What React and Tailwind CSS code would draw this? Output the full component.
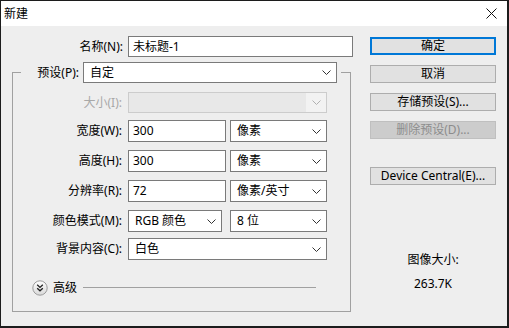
import React from 'react';

const font = { fontFamily: '"Noto Sans", "Noto Sans CJK SC", sans-serif' };

function Chevron({ color = '#333' }) {
  return (
    <svg width="9" height="5" viewBox="0 0 9 5" className="shrink-0">
      <polyline points="0.5,0.5 4.5,4.5 8.5,0.5" fill="none" stroke={color} strokeWidth="1" />
    </svg>
  );
}

function Select({ value, width, height = 'h-[22px]' }) {
  return (
    <div className={`${width} ${height} flex items-center justify-between border border-[#7a7a7a] bg-white pl-[6px] pr-[5px]`}>
      <span className="leading-none">{value}</span>
      <Chevron />
    </div>
  );
}

function Input({ value, width }) {
  return (
    <div className={`${width} h-[22px] flex items-center border border-[#7a7a7a] bg-white pl-[4px]`}>
      <span className="leading-none">{value}</span>
    </div>
  );
}

function Label({ children, disabled }) {
  return (
    <div className={`w-[110px] shrink-0 text-right pr-[1px] ${disabled ? 'text-[#a8a8a8]' : 'text-black'}`}>{children}</div>
  );
}

function Button({ children, primary, disabled }) {
  let cls = 'border border-[#adadad] bg-[#e1e1e1] text-black';
  if (primary) cls = 'border-2 border-[#0078d7] bg-[#e1e1e1] text-black';
  if (disabled) cls = 'border border-[#bfbfbf] bg-[#cccccc] text-[#8c8c8c]';
  return (
    <div className={`w-[126px] h-[18px] flex items-center justify-center leading-none ${cls}`}>{children}</div>
  );
}

export default function App() {
  return (
    <div style={font} className="w-[509px] h-[328px] border-t border-l border-r-2 border-b-2 border-[#1c1c1c] flex flex-col text-[12px] text-black bg-[#eeeeee]">
      {/* title bar */}
      <div className="h-[25px] bg-white flex items-center justify-between pl-[3px] pr-[10px]">
        <span className="text-[12px] leading-none">新建</span>
        <svg width="11" height="11" viewBox="0 0 11 11">
          <path d="M0.5 0.5 L10.5 10.5 M10.5 0.5 L0.5 10.5" stroke="#111" strokeWidth="1" />
        </svg>
      </div>

      <div className="flex flex-1">
        {/* left column */}
        <div className="w-[360px] pt-[10px]">
          <div className="flex items-center">
            <div className="w-[122px] text-right">名称(N):</div>
            <div className="ml-[5px]">
              <div className="w-[225px] h-[21px] flex items-center border border-[#7a7a7a] bg-white pl-[4px] leading-none">未标题-1</div>
            </div>
          </div>

          <fieldset className="ml-[11px] mt-[5px] w-[339px] border border-[#a0a0a0] pb-[16px]">
            <legend className="ml-[8px] flex items-center pr-[4px]">
              <div className="w-[58px] text-right">预设(P):</div>
              <div className="ml-[4px]">
                <Select value="自定" width="w-[254px]" height="h-[21px]" />
              </div>
            </legend>

            <div className="mt-[9px] flex items-center">
              <Label disabled>大小(I):</Label>
              <div className="ml-[5px] w-[199px] h-[21px] flex border border-[#cccccc] bg-[#e8e8e8]">
                <div className="flex-1" />
                <div className="w-[20px] bg-[#f2f2f2] flex items-center justify-center">
                  <Chevron color="#b0b0b0" />
                </div>
              </div>
            </div>

            <div className="mt-[7px] flex items-center">
              <Label>宽度(W):</Label>
              <div className="ml-[5px] flex gap-[4px]">
                <Input value="300" width="w-[98px]" />
                <Select value="像素" width="w-[97px]" />
              </div>
            </div>

            <div className="mt-[8px] flex items-center">
              <Label>高度(H):</Label>
              <div className="ml-[5px] flex gap-[4px]">
                <Input value="300" width="w-[98px]" />
                <Select value="像素" width="w-[97px]" />
              </div>
            </div>

            <div className="mt-[8px] flex items-center">
              <Label>分辨率(R):</Label>
              <div className="ml-[5px] flex gap-[4px]">
                <Input value="72" width="w-[98px]" />
                <Select value="像素/英寸" width="w-[97px]" />
              </div>
            </div>

            <div className="mt-[8px] flex items-center">
              <Label>颜色模式(M):</Label>
              <div className="ml-[5px] flex gap-[8px]">
                <Select value="RGB 颜色" width="w-[94px]" />
                <Select value="8 位" width="w-[97px]" />
              </div>
            </div>

            <div className="mt-[6px] flex items-center">
              <Label>背景内容(C):</Label>
              <div className="ml-[5px]">
                <Select value="白色" width="w-[199px]" />
              </div>
            </div>

            <div className="mt-[20px] h-[15px] flex items-center">
              <svg width="16" height="16" viewBox="0 0 16 16" className="ml-[19px] shrink-0">
                <defs>
                  <linearGradient id="adv" x1="0" y1="0" x2="0" y2="1">
                    <stop offset="0" stopColor="#ffffff" />
                    <stop offset="1" stopColor="#d8d8d8" />
                  </linearGradient>
                </defs>
                <circle cx="8" cy="8" r="7.2" fill="url(#adv)" stroke="#9c9c9c" strokeWidth="1" />
                <polyline points="5.2,4.8 8,7.4 10.8,4.8" fill="none" stroke="#222" strokeWidth="1.3" />
                <polyline points="5.2,8.2 8,10.8 10.8,8.2" fill="none" stroke="#222" strokeWidth="1.3" />
              </svg>
              <span className="ml-[5px] leading-none">高级</span>
              <div className="ml-[6px] w-[233px] h-px bg-[#a0a0a0]" />
            </div>
          </fieldset>
        </div>

        {/* right column */}
        <div className="pl-[9px] pt-[11px] flex flex-col">
          <Button primary>确定</Button>
          <div className="mt-[10px]"><Button>取消</Button></div>
          <div className="mt-[10px]"><Button>存储预设(S)...</Button></div>
          <div className="mt-[10px]"><Button disabled>删除预设(D)...</Button></div>
          <div className="mt-[28px]"><Button>Device Central(E)...</Button></div>
          <div className="w-[126px] mt-[67px] text-center leading-[16px]">图像大小:</div>
          <div className="w-[126px] mt-[8px] text-center leading-[16px]">263.7K</div>
        </div>
      </div>
    </div>
  );
}
